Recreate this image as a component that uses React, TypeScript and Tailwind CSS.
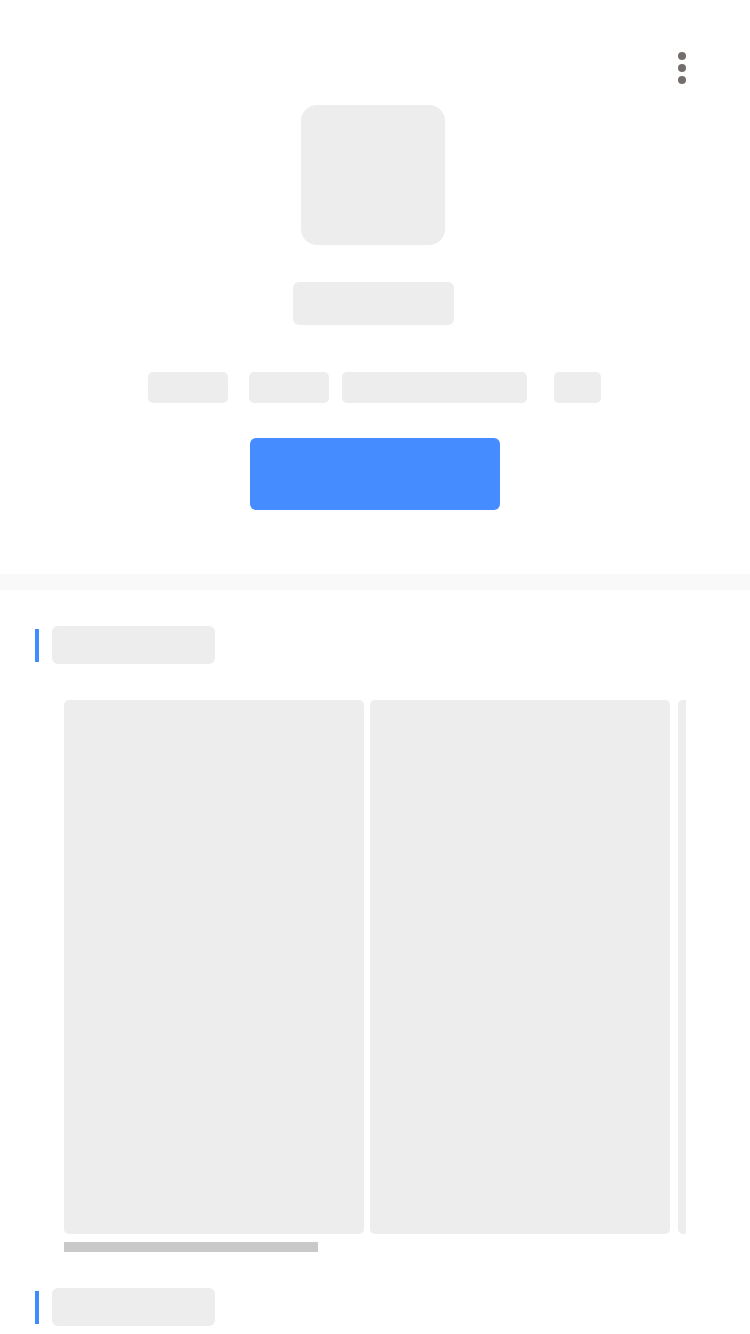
export default function App() {
  const cards = [0, 1, 2, 3, 4];

  return (
    <div className="w-[750px] min-h-[1334px] bg-white overflow-hidden font-['Liberation_Sans',sans-serif]">
      {/* Header */}
      <div className="flex justify-end pt-[52px] pr-[64px]">
        <div className="flex flex-col gap-[4px]">
          <span className="block w-[8px] h-[8px] rounded-full bg-[#736e6b]" />
          <span className="block w-[8px] h-[8px] rounded-full bg-[#736e6b]" />
          <span className="block w-[8px] h-[8px] rounded-full bg-[#736e6b]" />
        </div>
      </div>

      {/* Profile */}
      <div className="flex flex-col items-center">
        <div className="mt-[21px] mr-[4px] w-[144px] h-[140px] rounded-[16px] bg-[#ededed]" />
        <div className="mt-[37px] mr-[3px] w-[161px] h-[43px] rounded-[6px] bg-[#ededed]" />
        <div className="mt-[47px] flex items-center pr-[1px]">
          <div className="w-[80px] h-[31px] rounded-[5px] bg-[#ededed]" />
          <div className="ml-[21px] w-[80px] h-[31px] rounded-[5px] bg-[#ededed]" />
          <div className="ml-[13px] w-[185px] h-[31px] rounded-[5px] bg-[#ededed]" />
          <div className="ml-[27px] w-[47px] h-[31px] rounded-[5px] bg-[#ededed]" />
        </div>
        <div className="mt-[35px] w-[250px] h-[72px] rounded-[6px] bg-[#448cff]" />
      </div>

      <div className="mt-[64px] h-[16px] bg-[#f9f9f9]" />

      {/* Section one */}
      <div className="mt-[36px] flex items-center pl-[35px]">
        <div className="w-[4px] h-[33px] bg-[#3f8cff]" />
        <div className="ml-[13px] w-[163px] h-[38px] rounded-[6px] bg-[#ededed]" />
      </div>

      <div className="mt-[36px] ml-[64px] w-[622px] overflow-hidden">
        <div className="flex">
          {cards.map((c) => (
            <div
              key={c}
              className={
                c === 0
                  ? 'shrink-0 w-[300px] h-[534px] rounded-[5px] bg-[#ededed]'
                  : c === 1
                    ? 'shrink-0 ml-[6px] w-[300px] h-[534px] rounded-[5px] bg-[#ededed]'
                    : 'shrink-0 ml-[8px] w-[300px] h-[534px] rounded-[5px] bg-[#ededed]'
              }
            />
          ))}
        </div>
        <div className="mt-[8px] w-[254px] h-[10px] bg-[#c9c9c9]" />
      </div>

      {/* Section two */}
      <div className="mt-[36px] flex items-center pl-[35px]">
        <div className="w-[4px] h-[33px] bg-[#3f8cff]" />
        <div className="ml-[13px] w-[163px] h-[38px] rounded-[6px] bg-[#ededed]" />
      </div>
    </div>
  );
}
